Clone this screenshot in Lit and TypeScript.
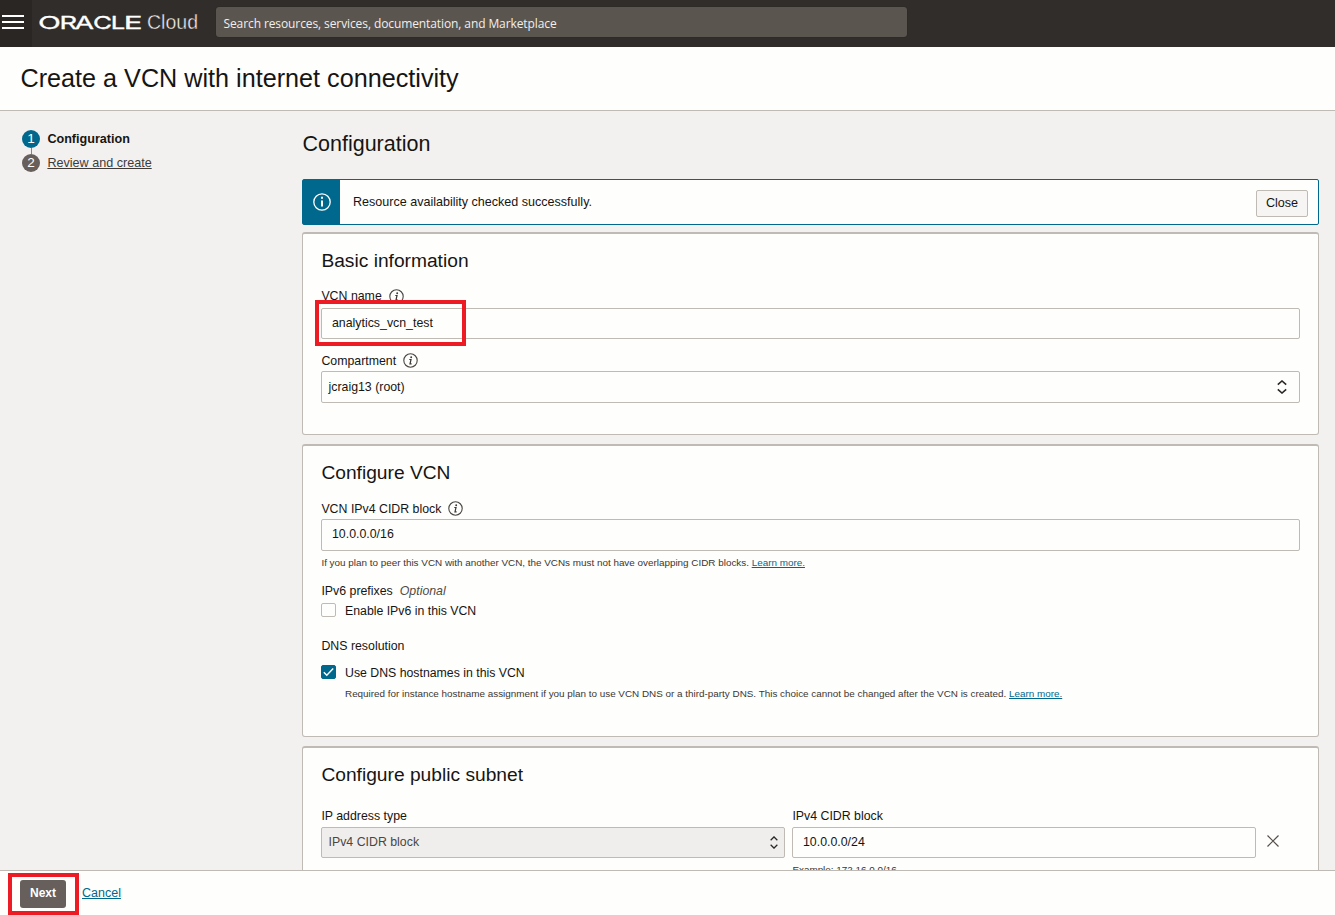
import { LitElement, html, css, svg } from "lit";
import { customElement } from "lit/decorators.js";

const infoIcon = html`<svg class="info" width="15" height="15" viewBox="0 0 15 15">
  <circle cx="7.5" cy="7.5" r="6.7" fill="none" stroke="#4a4643" stroke-width="1.1" />
  <circle cx="8.2" cy="4.3" r="0.95" fill="#3a3633" />
  <path d="M6.3 6.5h1.7l-1 4.3h1.6" fill="none" stroke="#3a3633" stroke-width="1.2" />
</svg>`;

const chevrons = (w: number, h: number) => html`<svg width=${w} height=${h} viewBox="0 0 10 14" preserveAspectRatio="none">
  ${svg`<path d="M0.8 4.6 5 1l4.2 3.6M0.8 9.4 5 13l4.2-3.6" fill="none" stroke="#2b2725" stroke-width="1.6" />`}
</svg>`;

@customElement("app-root")
export class AppRoot extends LitElement {
  static styles = css`
    :host {
      display: flex;
      flex-direction: column;
      height: 915px;
      overflow: hidden;
      position: relative;
      background: #f3f1f0;
      color: #161513;
      font-family: "Liberation Sans", Arial, sans-serif;
      font-size: 12.35px;
      line-height: 16px;
    }
    * { box-sizing: border-box; }
    svg { display: block; flex: none; }
    a { color: #00688c; text-decoration: underline; }
    .top { display: flex; height: 47px; flex: none; background: #312d2a; }
    .menu { width: 32px; background: #2a2624; padding: 15px 0 0 2px; }
    .logo { margin-left: 6px; width: 178px; }
    .search {
      margin-top: 7px; width: 691px; height: 30px; border-radius: 3px;
      background: #5b554f; color: #f1efed; padding: 0 7.5px; line-height: 33px;
      font-family: "Open Sans", "Noto Sans", sans-serif; font-size: 12px; letter-spacing: -0.1px;
      box-shadow: 0 0 1px #1c1917;
      white-space: nowrap;
    }
    .titlebar {
      height: 64px; flex: none; background: #fefefc; border-bottom: 1px solid #bfbab4;
      padding-left: 20.5px; font-size: 25.2px; line-height: 63px;
    }
    .main { display: flex; height: 759px; flex: none; overflow: hidden; }
    .steps { width: 302px; flex: none; padding: 19px 0 0 22px; }
    .step { display: flex; align-items: center; height: 18px; gap: 7.4px; }
    .num {
      width: 18px; height: 18px; border-radius: 50%; background: #00688c; color: #fff;
      text-align: center; font-size: 13.5px; line-height: 18px;
    }
    .num.idle { background: #665f5b; }
    .line { width: 1px; height: 6px; margin-left: 9px; background: #8b8580; }
    .current { font-weight: bold; font-size: 12.6px; padding-bottom: 1px; }
    .later { text-decoration: underline; color: #3f3b38; font-size: 12.6px; padding-bottom: 1px; }
    .content { width: 1017px; display: flex; flex-direction: column; }
    h1, h2 { margin: 0; font-weight: normal; }
    h1 { font-size: 21.5px; height: 68px; line-height: 67px; flex: none; padding-left: 0.5px; }
    .alert {
      display: flex; align-items: center; height: 46px; flex: none; margin-bottom: 7px;
      border: 1px solid #00688c; border-radius: 2px; background: #fefefc; padding-right: 10px;
    }
    .badge {
      width: 37px; height: 44px; background: #00688c; display: flex;
      align-items: center; justify-content: center;
    }
    .message { flex: 1; padding: 0 0 1px 13px; font-size: 12.55px; }
    .close {
      width: 52px; height: 27px; margin-top: 3px; border: 1px solid #bfbab4; border-radius: 2px;
      background: #f6f5f3; text-align: center; line-height: 24px; font-size: 12.6px;
    }
    .card {
      flex: none; margin-bottom: 9px; padding: 0 18px; background: #fefefc;
      border: 1px solid #bfbab4; border-top-width: 2px; border-radius: 3px;
    }
    .basic { height: 203px; }
    .vcn { height: 293px; }
    .subnet { height: 200px; }
    h2 { font-size: 19.2px; height: 52px; line-height: 54px; padding-left: 0.4px; }
    .label { display: flex; align-items: center; height: 22px; gap: 7px; padding-left: 0.4px; }
    .label.first { padding-bottom: 2px; }
    .label.short { height: 21px; }
    .label.second { margin-top: 11px; height: 21px; }
    .input {
      display: flex; align-items: center; justify-content: space-between; height: 31px;
      border: 1px solid #bfbab4; border-radius: 2px; padding: 0 12px 2px 10px;
    }
    .input.tall { height: 32px; }
    .select { padding: 0 12px 0 6.5px; }
    .help { font-size: 9.88px; height: 23px; line-height: 24px; color: #3a3633; white-space: nowrap; padding-left: 0.4px; }
    .ipv6 { margin-top: 8px; height: 18px; }
    .optional { font-style: italic; color: #4f4a47; }
    .dns { margin-top: 16px; height: 20px; }
    .check { display: flex; align-items: center; height: 20px; gap: 9px; }
    .check span + span { padding-top: 1px; font-size: 12.3px; }
    .check.on { margin-top: 6px; }
    .box { width: 15px; height: 14px; border: 1px solid #bfbab4; border-radius: 2px; }
    .box.on { background: #00688c; border-color: #00688c; }
    .under { padding-left: 24px; }
    .cols { display: grid; grid-template-columns: 464px 464px 20px; column-gap: 7px; padding-top: 6px; }
    .cols .label { padding-bottom: 2px; }
    .disabled { background: #f0eeed; color: #4a4643; padding-right: 6px; padding-bottom: 1px; }
    .remove { padding: 29px 0 0 4px; }
    .footer {
      flex: 1; display: flex; align-items: flex-start; background: #fefefc;
      border-top: 1px solid #bfbab4; padding: 9px 0 0 20px; gap: 16px; font-size: 12.5px;
    }
    .next {
      width: 46px; height: 28px; border-radius: 3px; background: #665f5b; color: #fff;
      font-weight: bold; font-size: 12px; text-align: center; line-height: 26px;
    }
    .cancel { margin-top: 5px; }
    .mark { position: absolute; border: 4px solid #ed1c24; }
    .mark-name { left: 315px; top: 300px; width: 151px; height: 46px; }
    .mark-next { left: 8px; top: 873px; width: 71px; height: 42px; }
  `;

  render() {
    return html`
      <div class="top">
        <div class="menu">
          <svg width="22" height="14" viewBox="0 0 22 14">
            <path d="M0 1h22M0 7h22M0 13h22" stroke="#fff" stroke-width="1.8" />
          </svg>
        </div>
        <svg class="logo" width="178" height="47" viewBox="0 0 178 47">
          <text y="28.8" font-family="Inter, sans-serif" font-size="17.4" font-weight="400" fill="#fff" stroke="#fff" stroke-width="0.3"><tspan x="0" textLength="22.8" lengthAdjust="spacingAndGlyphs">O</tspan><tspan x="21.4" textLength="17.6" lengthAdjust="spacingAndGlyphs">R</tspan><tspan x="36.8" textLength="19.2" lengthAdjust="spacingAndGlyphs">A</tspan><tspan x="55" textLength="19" lengthAdjust="spacingAndGlyphs">C</tspan><tspan x="72.8" textLength="14.5" lengthAdjust="spacingAndGlyphs">L</tspan><tspan x="85.8" textLength="18.8" lengthAdjust="spacingAndGlyphs">E</tspan></text>
          <text x="109" y="29.3" font-family="Liberation Sans, sans-serif" font-size="19.5" fill="#f5f3f1" stroke="#312d2a" stroke-width="0.4" textLength="51" lengthAdjust="spacingAndGlyphs">Cloud</text>
        </svg>
        <div class="search">Search resources, services, documentation, and Marketplace</div>
      </div>
      <div class="titlebar">Create a VCN with internet connectivity</div>
      <div class="main">
        <div class="steps">
          <div class="step"><span class="num">1</span><span class="current">Configuration</span></div>
          <div class="line"></div>
          <div class="step"><span class="num idle">2</span><span class="later">Review and create</span></div>
        </div>
        <div class="content">
          <h1>Configuration</h1>
          <div class="alert">
            <div class="badge">
              <svg width="18" height="18" viewBox="0 0 18 18">
                <circle cx="9" cy="9" r="8.2" fill="none" stroke="#fff" stroke-width="1.3" />
                <path d="M9 3.8v2M9 7.4v6.2" stroke="#fff" stroke-width="2" />
              </svg>
            </div>
            <span class="message">Resource availability checked successfully.</span>
            <div class="close">Close</div>
          </div>
          <section class="card basic">
            <h2>Basic information</h2>
            <div class="label first"><span>VCN name</span>${infoIcon}</div>
            <div class="input">analytics_vcn_test</div>
            <div class="label second"><span>Compartment</span>${infoIcon}</div>
            <div class="input tall select"><span>jcraig13 (root)</span>${chevrons(10, 14)}</div>
          </section>
          <section class="card vcn">
            <h2>Configure VCN</h2>
            <div class="label short"><span>VCN IPv4 CIDR block</span>${infoIcon}</div>
            <div class="input tall">10.0.0.0/16</div>
            <div class="help">If you plan to peer this VCN with another VCN, the VCNs must not have overlapping CIDR blocks. <a>Learn more.</a></div>
            <div class="label ipv6"><span>IPv6 prefixes</span><span class="optional">Optional</span></div>
            <div class="check"><span class="box"></span><span>Enable IPv6 in this VCN</span></div>
            <div class="label dns">DNS resolution</div>
            <div class="check on">
              <span class="box on"><svg width="13" height="12" viewBox="0 0 13 12"><path d="M1.8 6.2 4.8 9.2 11.2 2.6" fill="none" stroke="#fff" stroke-width="1.4" /></svg></span>
              <span>Use DNS hostnames in this VCN</span>
            </div>
            <div class="help under">Required for instance hostname assignment if you plan to use VCN DNS or a third-party DNS. This choice cannot be changed after the VCN is created. <a>Learn more.</a></div>
          </section>
          <section class="card subnet">
            <h2>Configure public subnet</h2>
            <div class="cols">
              <div>
                <div class="label short">IP address type</div>
                <div class="input select disabled"><span>IPv4 CIDR block</span>${chevrons(8, 13)}</div>
              </div>
              <div>
                <div class="label short">IPv4 CIDR block</div>
                <div class="input">10.0.0.0/24</div>
                <div class="help">Example: 172.16.0.0/16</div>
              </div>
              <div class="remove">
                <svg width="12" height="12" viewBox="0 0 12 12"><path d="M0.5 0.5 11.5 11.5M11.5 0.5 0.5 11.5" stroke="#55504c" stroke-width="1.2" /></svg>
              </div>
            </div>
          </section>
        </div>
      </div>
      <div class="footer">
        <div class="next">Next</div>
        <a class="cancel">Cancel</a>
      </div>
      <div class="mark mark-name"></div>
      <div class="mark mark-next"></div>
    `;
  }
}
